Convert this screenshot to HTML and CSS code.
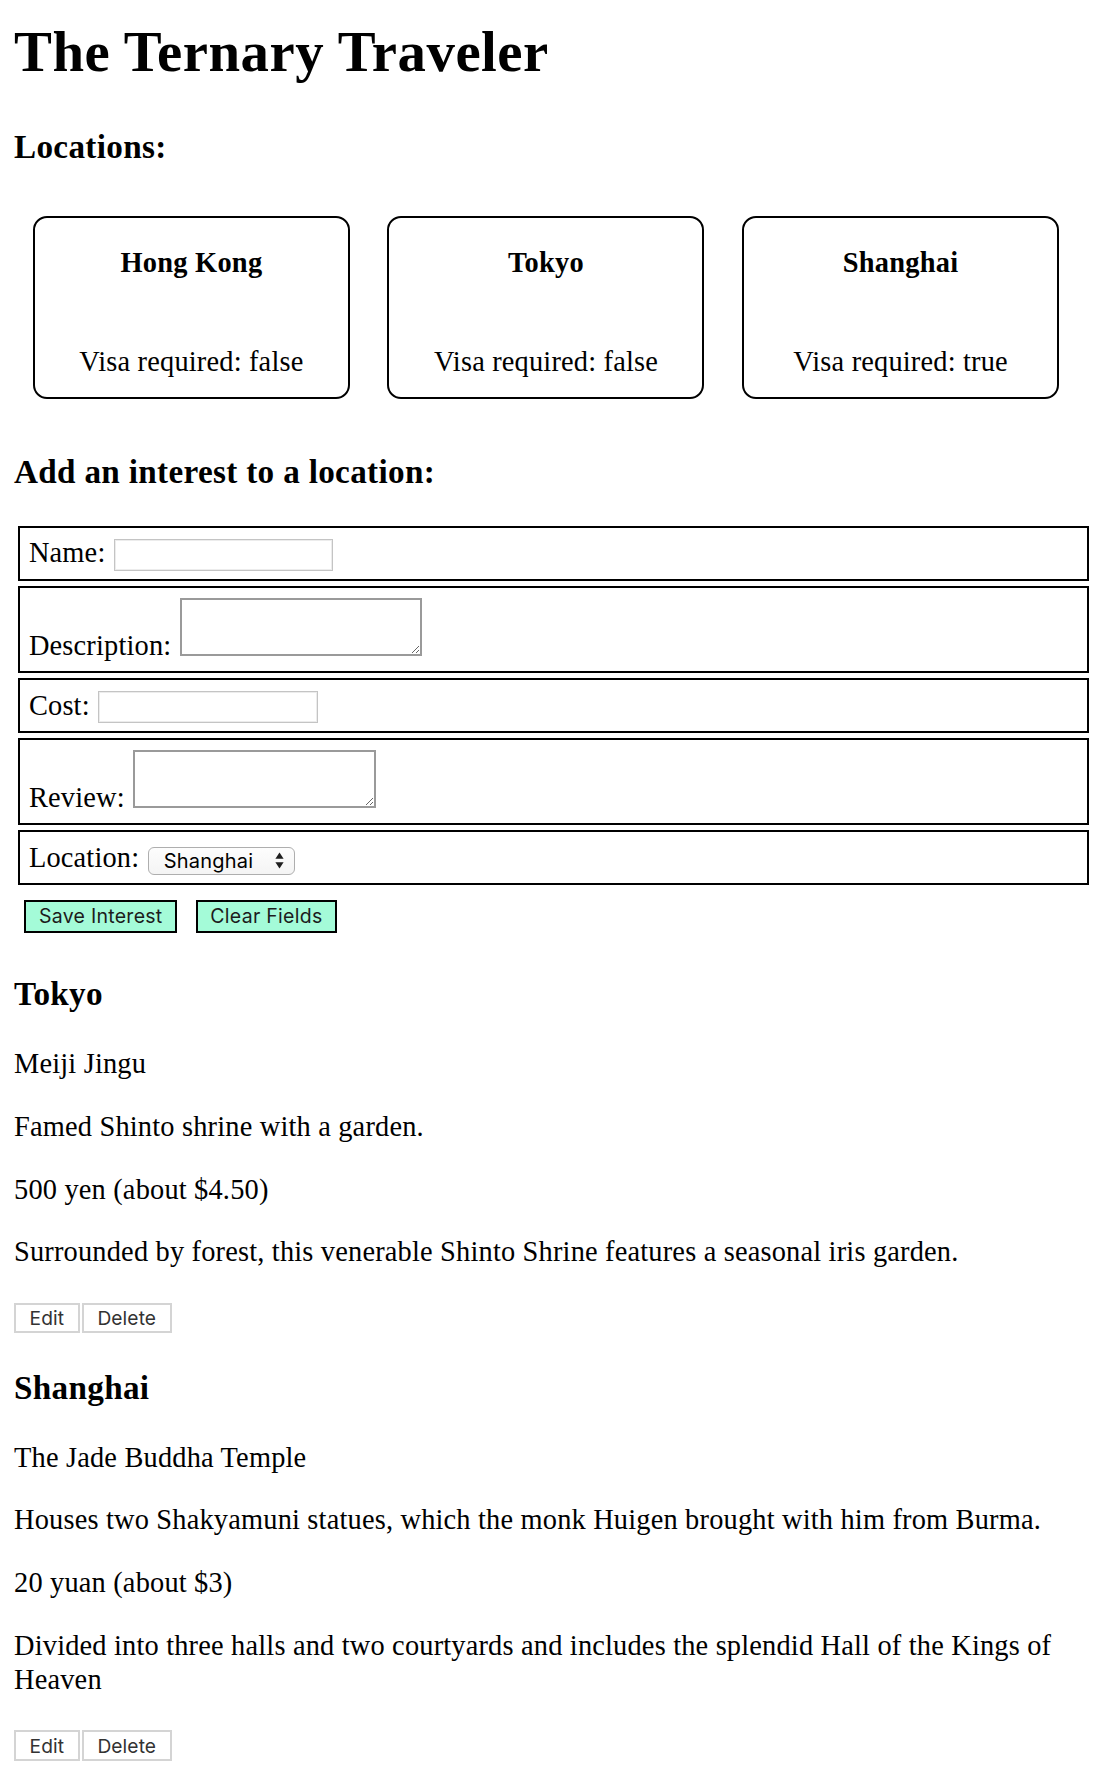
FILE: index.html
```html
<!DOCTYPE html>
<html lang="en">
<head>
<meta charset="utf-8">
<title>The Ternary Traveler</title>
<link rel="stylesheet" href="styles.css">
</head>
<body>
  <h1 class="title">The Ternary Traveler</h1>

  <h3 class="section-title locations-title">Locations:</h3>
  <div class="cards">
    <div class="card">
      <h4 class="card-name">Hong Kong</h4>
      <p class="card-visa">Visa required: false</p>
    </div>
    <div class="card">
      <h4 class="card-name">Tokyo</h4>
      <p class="card-visa">Visa required: false</p>
    </div>
    <div class="card">
      <h4 class="card-name">Shanghai</h4>
      <p class="card-visa">Visa required: true</p>
    </div>
  </div>

  <h3 class="section-title form-title">Add an interest to a location:</h3>
  <form class="interest-form">
    <div class="field">
      <label class="field-label" for="name">Name:</label>
      <input class="text-input" id="name" type="text">
    </div>
    <div class="field field-area">
      <label class="field-label" for="description">Description:</label>
      <textarea class="text-area" id="description"></textarea>
    </div>
    <div class="field">
      <label class="field-label" for="cost">Cost:</label>
      <input class="text-input" id="cost" type="text">
    </div>
    <div class="field field-area">
      <label class="field-label" for="review">Review:</label>
      <textarea class="text-area" id="review"></textarea>
    </div>
    <div class="field field-select">
      <label class="field-label" for="location">Location:</label>
      <span class="select-wrap">
        <select class="select" id="location">
          <option>Hong Kong</option>
          <option>Tokyo</option>
          <option selected>Shanghai</option>
        </select>
        <svg class="select-arrows" width="9" height="17" viewBox="0 0 9 17" aria-hidden="true">
          <path d="M4.5 0.5 L8.6 6.8 L0.4 6.8 Z" fill="#1e1e1e"/>
          <path d="M0.4 10.2 L8.6 10.2 L4.5 16.5 Z" fill="#1e1e1e"/>
        </svg>
      </span>
    </div>
  </form>
  <div class="form-actions">
    <button class="btn-mint" type="button">Save Interest</button>
    <button class="btn-mint" type="button">Clear Fields</button>
  </div>

  <section class="interest interest-first">
    <h3 class="section-title">Tokyo</h3>
    <p class="interest-line interest-name">Meiji Jingu</p>
    <p class="interest-line">Famed Shinto shrine with a garden.</p>
    <p class="interest-line">500 yen (about $4.50)</p>
    <p class="interest-line">Surrounded by forest, this venerable Shinto Shrine features a seasonal iris garden.</p>
    <div class="item-actions">
      <button class="btn-plain" type="button">Edit</button>
      <button class="btn-plain" type="button">Delete</button>
    </div>
  </section>

  <section class="interest">
    <h3 class="section-title">Shanghai</h3>
    <p class="interest-line interest-name">The Jade Buddha Temple</p>
    <p class="interest-line">Houses two Shakyamuni statues, which the monk Huigen brought with him from Burma.</p>
    <p class="interest-line">20 yuan (about $3)</p>
    <p class="interest-line">Divided into three halls and two courtyards and includes the splendid Hall of the Kings of Heaven</p>
    <div class="item-actions">
      <button class="btn-plain" type="button">Edit</button>
      <button class="btn-plain" type="button">Delete</button>
    </div>
  </section>
</body>
</html>
```
FILE: styles.css
```css
* {
  box-sizing: border-box;
}

html {
  background: #fff;
}

body {
  margin: 0;
  padding: 0 14px 24px;
  font-family: "Liberation Serif", "Times New Roman", serif;
  font-size: 28.4px;
  line-height: 34.3px;
  letter-spacing: 0.18px;
  color: #000;
}

.title {
  margin: 18.3px 0 0;
  font-size: 56.8px;
  line-height: 68px;
  font-weight: 700;
  letter-spacing: 0.5px;
}

.section-title {
  margin: 0;
  font-size: 33.2px;
  line-height: 40px;
  font-weight: 700;
  letter-spacing: 0.32px;
}

.locations-title {
  margin-top: 41px;
}

/* location cards */
.cards {
  display: flex;
  gap: 37.6px;
  margin: 48.7px 0 0 18.9px;
}

.card {
  width: 317px;
  height: 183.3px;
  border: 2px solid #000;
  border-radius: 14px;
  padding: 28px 0 18px;
  display: flex;
  flex-direction: column;
  justify-content: space-between;
  text-align: center;
}

.card-name {
  margin: 0;
  font-size: 28.4px;
  line-height: 34.3px;
  font-weight: 700;
  letter-spacing: 0.25px;
}

.card-visa {
  margin: 0;
}

/* form */
.form-title {
  margin-top: 53px;
}

.interest-form {
  margin: 33.7px 10.7px 0 3.9px;
  display: flex;
  flex-direction: column;
  gap: 5px;
}

.field {
  display: flex;
  align-items: flex-end;
  gap: 8.5px;
  border: 2px solid #000;
  padding: 8.5px 8px 8px 9px;
}

.field-area {
  padding-top: 10.6px;
  padding-bottom: 8px;
}

.field-select {
  padding-top: 9px;
  padding-bottom: 7.3px;
}

.field-label {
  line-height: 34.3px;
}

.text-input {
  width: 219.5px;
  height: 31.5px;
  margin: 0;
  border: 1px solid #c4c4c4;
  box-shadow: inset 0 0 0 1px #ececec;
  background: #fff;
  font-family: "Inter", "Liberation Sans", sans-serif;
  font-size: 19px;
  padding: 0 4px;
}

.text-area {
  width: 242.5px;
  height: 57.2px;
  margin: 0 0 7.5px;
  border: 2px solid #9a9a9a;
  background: #fff;
  font-family: "Liberation Mono", monospace;
  font-size: 19px;
  padding: 2px;
  resize: both;
}

.select-wrap {
  position: relative;
  display: inline-flex;
  margin-bottom: 0.5px;
}

.select {
  -webkit-appearance: none;
  appearance: none;
  width: 147.3px;
  height: 28.3px;
  margin: 0;
  padding: 0 0 0 15px;
  border: 1px solid #aeaeae;
  border-radius: 6px;
  background: linear-gradient(#fdfdfd, #f4f4f4);
  color: #000;
  font-family: "Inter", "Liberation Sans", sans-serif;
  font-size: 20px;
  letter-spacing: 0.2px;
}

.select-arrows {
  position: absolute;
  right: 11px;
  top: 5.2px;
  pointer-events: none;
}

/* form buttons */
.form-actions {
  display: flex;
  gap: 18.6px;
  margin: 15px 0 0 10.3px;
}

.btn-mint {
  height: 33px;
  margin: 0;
  padding: 0 12.6px;
  border: 2px solid #000;
  background: #a4fbd8;
  color: #1c1c1c;
  font-family: "Inter", "Liberation Sans", sans-serif;
  font-size: 19.5px;
  letter-spacing: 0.28px;
}

/* interests */
.interest {
  margin-top: 34.4px;
}

.interest-first {
  margin-top: 41.7px;
}

.interest-line {
  margin: 28.4px 0 0;
}

.interest-name {
  margin-top: 33px;
}

.item-actions {
  display: flex;
  gap: 2px;
  margin-top: 33px;
}

.btn-plain {
  height: 30.6px;
  margin: 0;
  padding: 0 13.6px;
  border: 2px solid #d4d4d4;
  background: #fff;
  color: #333;
  font-family: "Inter", "Liberation Sans", sans-serif;
  font-size: 19.2px;
  letter-spacing: 0.1px;
}
```
